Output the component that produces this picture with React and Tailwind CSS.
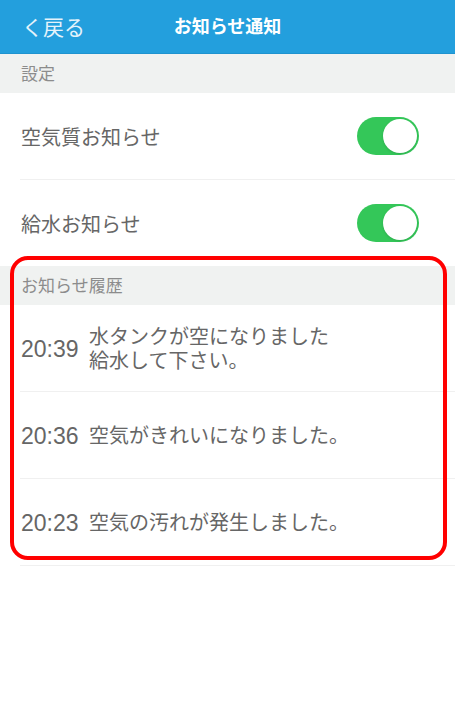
import React, { useState } from 'react';

const font = { fontFamily: '"Liberation Sans", "Noto Sans CJK JP", sans-serif' };

const Toggle = ({ on, onChange }) => (
    <button
        type="button"
        onClick={onChange}
        className={`flex h-[38px] w-[62px] items-center rounded-full p-[2px] ${on ? 'justify-end bg-[#34c759]' : 'justify-start bg-[#e5e5e5]'}`}
    >
        <span className="block h-[34px] w-[34px] rounded-full bg-white shadow-sm" />
    </button>
);

const SectionHeader = ({ children }) => (
    <div className="flex h-[39px] items-center bg-[#f0f2f1] pl-[21px] pt-[2px] text-[17px] text-[#8c8c8c]">
        {children}
    </div>
);

const history = [
    { time: '20:39', lines: ['水タンクが空になりました', '給水して下さい。'] },
    { time: '20:36', lines: ['空気がきれいになりました。'] },
    { time: '20:23', lines: ['空気の汚れが発生しました。'] },
];

const App = () => {
    const [airQuality, setAirQuality] = useState(true);
    const [water, setWater] = useState(true);

    return (
        <div className="relative min-h-[712px] w-full bg-white" style={font}>
            {/* Header */}
            <div className="relative flex h-[54px] items-center justify-center border-b border-[#1f93cf] bg-[#239fdd]">
                <button type="button" className="absolute left-[22px] top-1/2 -translate-y-1/2 pt-[2px] text-[21px] text-[#e4f3fb]">
                    く戻る
                </button>
                <h1 className="pt-[2px] text-[18px] font-bold text-white">お知らせ通知</h1>
            </div>

            <SectionHeader>設定</SectionHeader>
            <div className="ml-[20px] flex h-[87px] items-center justify-between border-b border-[#f0f0f0] pr-[36px]">
                <span className="pl-[1px] pt-[3px] text-[20px] text-[#666666]">空気質お知らせ</span>
                <Toggle on={airQuality} onChange={() => setAirQuality(!airQuality)} />
            </div>
            <div className="ml-[20px] flex h-[86px] items-center justify-between pr-[36px]">
                <span className="pl-[1px] pt-[3px] text-[20px] text-[#666666]">給水お知らせ</span>
                <Toggle on={water} onChange={() => setWater(!water)} />
            </div>

            <SectionHeader>お知らせ履歴</SectionHeader>
            {history.map((item) => (
                <div key={item.time} className="ml-[20px] flex h-[87px] items-center border-b border-[#f0f0f0] pt-[2px]">
                    <span className="w-[69px] pl-[1px] text-[23px] text-[#666666]">{item.time}</span>
                    <div className="text-[20px] leading-[24px] text-[#666666]">
                        {item.lines.map((line) => (
                            <div key={line}>{line}</div>
                        ))}
                    </div>
                </div>
            ))}

            {/* Red annotation frame */}
            <div className="pointer-events-none absolute left-[10px] top-[256px] h-[304px] w-[437px] rounded-[18px] border-4 border-[#ff0000]" />
        </div>
    );
};

export default App;
